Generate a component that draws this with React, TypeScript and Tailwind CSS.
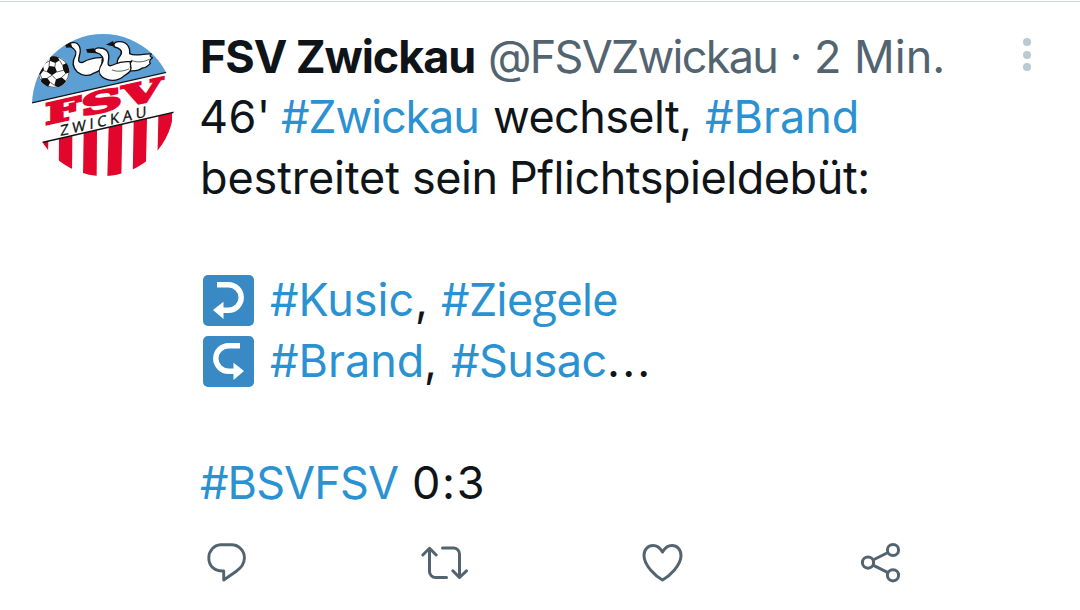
import React from 'react';
import clsx from 'clsx';

interface WordProps {
    children: React.ReactNode;
    link?: boolean;
    className?: string;
}

const Word: React.FC<WordProps> = ({ children, link, className }) => (
    <span className={clsx('shrink-0 whitespace-nowrap', link && 'text-[#2b92d2]', className)}>
        {children}
    </span>
);

// Club crest
const Avatar: React.FC = () => (
    <svg viewBox="36 40 426 426" className="w-[142px] h-[142px]" aria-label="FSV Zwickau">
        <defs>
            <clipPath id="crest">
                <circle cx="249" cy="253" r="213" />
            </clipPath>
            <clipPath id="ball">
                <circle cx="101" cy="154" r="47" />
            </clipPath>
        </defs>
        <g clipPath="url(#crest)">
            <rect x="30" y="30" width="440" height="440" fill="#fff" />
            <path d="M30 30H470V148L30 248Z" fill="#5b9fd4" />

            {/* stripes */}
            <g fill="#e2062c">
                <path d="M44 370L85 361L82 470H44Z" />
                <path d="M117 354L157 345L156 470H116Z" />
                <path d="M191 337L231 328L230 470H189Z" />
                <path d="M266 320L307 311L304 470H262Z" />
                <path d="M341 303L381 294L377 470H338Z" />
                <path d="M415 287L456 277V470H411Z" />
            </g>
            <path d="M30 248L470 148" stroke="#111" strokeWidth="4" />
            <path d="M60 367L470 273" stroke="#111" strokeWidth="4" />

            {/* swans */}
            <g fill="#fff" stroke="#111" strokeWidth="4" strokeLinejoin="round" strokeLinecap="round">
                <path d="M302 103C310 90 297 82 284 79C275 76 282 62 298 63C319 62 331 78 329 99C346 109 367 98 394 100C386 107 393 109 397 111C386 120 388 124 391 128C382 138 374 142 367 142C354 153 322 153 304 144C287 131 289 119 302 103Z" />
                <path d="M166 105C172 91 162 84 152 78C145 71 150 66 160 65C178 66 185 84 178 106C173 124 178 127 188 125C207 114 225 110 249 111C243 120 247 126 247 139C242 151 227 155 220 158C207 169 184 164 172 154C157 140 156 123 166 105Z" />
                <path d="M246 128C255 113 244 99 229 96C218 91 225 80 240 82C262 83 270 99 265 121C262 138 270 138 286 130C304 121 315 124 335 122C324 129 337 132 331 139C337 141 329 148 331 151C322 162 315 161 307 170C293 182 263 182 247 169C232 157 237 143 246 128Z" />
                <path d="M277 148C292 155 314 151 326 145M334 119C353 128 374 123 388 116" fill="none" strokeWidth="2" />
            </g>
            <g fill="#111">
                <path d="M258 72L279 61L286 78Z" />
                <path d="M198 86L222 83L230 98L202 96Z" />
                <path d="M134 70L151 64L157 80L139 81Z" />
            </g>

            {/* ball */}
            <circle cx="101" cy="154" r="47" fill="#fff" />
            <g clipPath="url(#ball)">
                <path d="M87 136L105 138L111 154L96 164L80 153ZM90 105L111 107L119 119L106 127L89 120ZM127 133L142 126L150 155L137 159L130 149ZM108 176L125 170L138 181L122 204L103 194ZM65 173L82 172L91 185L83 201L60 190ZM52 141L68 132L72 147L61 162L52 161Z" fill="#111" />
                <path d="M87 136L89 120M105 138L106 127M111 154L130 149M96 164L108 176M80 153L68 149M119 119L127 133M137 159L125 170M103 194L91 185M65 173L61 162M68 132L89 120M82 172L96 164" stroke="#111" strokeWidth="2" />
            </g>
            <circle cx="101" cy="154" r="46" fill="none" stroke="#111" strokeWidth="2" />

            <g transform="matrix(1 -0.225 0 1 0 332)">
                <g fill="#e2062c" stroke="#e2062c" strokeWidth="7" fontFamily="DejaVu Serif" fontWeight="700" fontSize="86">
                    <text x="76" y="-3" textLength="106" lengthAdjust="spacingAndGlyphs">F</text>
                    <text x="184" y="-3" textLength="122" lengthAdjust="spacingAndGlyphs">S</text>
                    <text x="307" y="-3" textLength="119" lengthAdjust="spacingAndGlyphs">V</text>
                </g>
                <text x="121" y="41" textLength="258" fill="#111" stroke="#111" fontFamily="Open Sans" fontSize="44">
                    ZWICKAU
                </text>
            </g>
        </g>
    </svg>
);

// Blue keycap with a hooked arrow
const ArrowEmoji: React.FC<{ flip?: boolean }> = ({ flip }) => (
    <svg viewBox="0 0 51 51" className={clsx('w-[51px] h-[51px] shrink-0', flip && '-scale-x-100')}>
        <rect width="51" height="51" rx="5" fill="#3889c4" />
        <path d="M14 9.8H25.5A12.7 12.7 0 0 1 25.5 35.2H19" fill="none" stroke="#fff" strokeWidth="5.4" />
        <path d="M10 35L20.5 26.8V44Z" fill="#fff" />
    </svg>
);

const App: React.FC = () => {
    return (
        <div className="w-[1080px] h-[610px] overflow-hidden bg-white pt-px font-['Inter','Liberation_Sans',sans-serif] text-[45px] leading-[61px] text-[#0f1419]">
            <div className="flex border-t border-[#cfd9de] pt-6">
                <div className="w-[200px] shrink-0 pl-8 pt-2">
                    <Avatar />
                </div>

                <div className="flex-1">
                    <div className="flex h-[60px] text-[#536471]">
                        <Word className="w-[288px] font-bold text-[#0f1419] tracking-[-1.1px]">FSV Zwickau</Word>
                        <Word className="w-[294px] tracking-[-1.75px]">@FSVZwickau</Word>
                        <Word className="w-7 mr-1 text-center">·</Word>
                        <Word>2 Min.</Word>
                        <div className="ml-auto mr-[49px] mt-3 flex flex-col gap-[4.5px]">
                            <span className="w-2 h-2 rounded-full bg-[#b9cad3]" />
                            <span className="w-2 h-2 rounded-full bg-[#b9cad3]" />
                            <span className="w-2 h-2 rounded-full bg-[#b9cad3]" />
                        </div>
                    </div>

                    <div className="flex -ml-px">
                        <Word className="w-[82px] tracking-[0.4px]">46'</Word>
                        <Word link className="w-[212px] tracking-[-1.15px]">#Zwickau</Word>
                        <Word className="w-[212px] tracking-[-0.6px]">wechselt,</Word>
                        <Word link>#Brand</Word>
                    </div>
                    <div className="flex">
                        <Word className="w-[212px] tracking-[-0.1px]">bestreitet</Word>
                        <Word className="w-[97px] tracking-[-0.5px]">sein</Word>
                        <Word className="tracking-[-0.45px]">Pflichtspieldebüt:</Word>
                    </div>

                    <div className="flex items-center mt-[61px] pl-[3px]">
                        <div className="w-[67px] pt-0.5"><ArrowEmoji /></div>
                        <Word link className="w-[145px]">#Kusic</Word>
                        <Word className="w-[26px]">,</Word>
                        <Word link className="tracking-[-0.6px]">
                            #Zie<span className="font-['Open_Sans',sans-serif] leading-none">g</span>ele
                        </Word>
                    </div>
                    <div className="flex items-center pl-[3px]">
                        <div className="w-[67px] pt-0.5"><ArrowEmoji flip /></div>
                        <Word link className="w-[154px]">#Brand</Word>
                        <Word className="w-[27px]">,</Word>
                        <Word link className="w-[156px] tracking-[-0.5px]">#Susac</Word>
                        <Word className="tracking-[2.2px]">...</Word>
                    </div>

                    <div className="flex mt-[61px]">
                        <Word link className="w-[212px] tracking-[-0.9px]">#BSVFSV</Word>
                        <Word className="tracking-[1.7px]">0:3</Word>
                    </div>
                </div>
            </div>

            {/* actions */}
            <div className="flex pl-[195px] pt-[17px] text-[#536471]">
                <svg viewBox="0 0 70 65" className="w-[70px] h-[65px]" fill="none" stroke="currentColor" strokeWidth="2.9">
                    <path d="M25.5 14.7H36.5A13 13 0 0 1 49.4 28C49.4 34.5 46 38 41 41.5L28.7 50V41C19.5 41.5 13.8 36 13.8 28A12.5 13.2 0 0 1 25.5 14.7Z" strokeLinejoin="round" />
                </svg>
                <svg viewBox="0 0 70 65" className="w-[70px] h-[65px] ml-[145px]" fill="none" stroke="currentColor" strokeWidth="3" strokeLinecap="round" strokeLinejoin="round">
                    <path d="M12.8 25L19.5 18.3L26.2 25M19.5 18.5V41.5A6 6 0 0 0 25.5 47.5H36.5M32.5 18H43.5A6 6 0 0 1 49.5 24V47M42.8 40.8L49.5 47.5L56.5 40.8" />
                </svg>
                <svg viewBox="0 0 70 65" className="w-[70px] h-[65px] ml-[150px]" fill="none" stroke="currentColor" strokeWidth="3" strokeLinejoin="round">
                    <path d="M32.5 22C30 17.5 26.5 15.4 23 15.4C18 15.4 14 19.5 14 25.5C14 35.5 26 46.5 32.5 50C39 46.5 51 35.5 51 25.5C51 19.5 47 15.4 42 15.4C38.5 15.4 35 17.5 32.5 22Z" />
                </svg>
                <svg viewBox="0 0 70 65" className="w-[70px] h-[65px] ml-[150px]" fill="none" stroke="currentColor" strokeWidth="3">
                    <circle cx="18" cy="32.6" r="5.6" />
                    <circle cx="43" cy="20" r="5.6" />
                    <circle cx="43" cy="45.3" r="5.6" />
                    <path d="M23 30L38 22.5M23 35.2L38 42.7" />
                </svg>
            </div>
        </div>
    );
};

export default App;
